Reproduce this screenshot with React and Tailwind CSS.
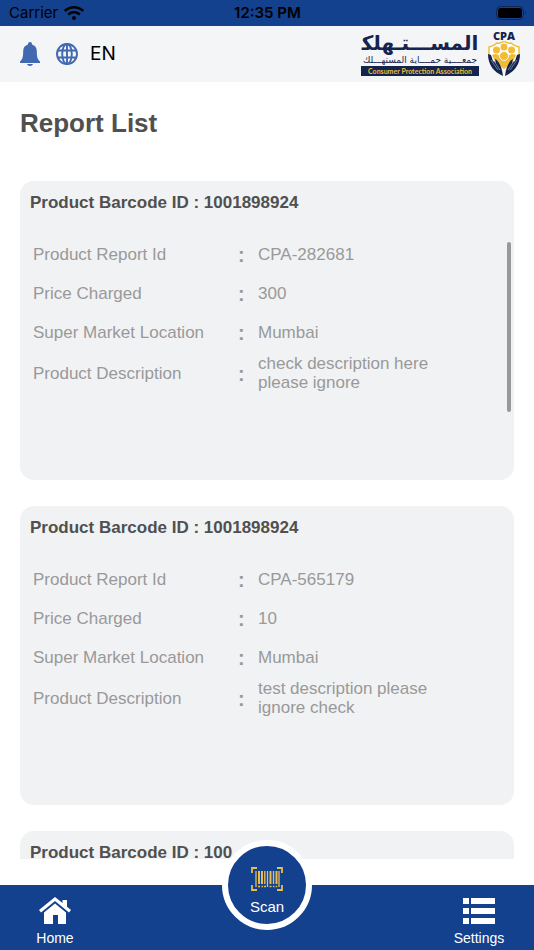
import { FaWifi } from 'react-icons/fa';

const reports = [
  { barcode: '1001898924', id: 'CPA-282681', price: '300', location: 'Mumbai', description: 'check description here please ignore', scrolling: true },
  { barcode: '1001898924', id: 'CPA-565179', price: '10', location: 'Mumbai', description: 'test description please ignore check' },
  { barcode: '100' },
];

function StatusBar() {
  return (
    <div className="h-[26px] shrink-0 bg-[#13418e] grid grid-cols-3 items-center pl-[9px] pr-2 text-black font-['Inter',sans-serif] text-[15px]">
      <div className="flex items-center gap-1.5">
        <span>Carrier</span>
        <FaWifi size={20} />
      </div>
      <span className="text-center font-semibold">12:35 PM</span>
      <svg className="justify-self-end" width="30" height="14" viewBox="0 0 30 14">
        <rect x="0.5" y="0.5" width="27" height="13" rx="4" fill="none" stroke="#0b2858" />
        <rect x="2" y="2" width="24" height="10" rx="2.5" fill="#000" />
        <path d="M29 5v4c1-.6 1-3.400 0-4z" fill="#0b2858" />
      </svg>
    </div>
  );
}

function BellIcon() {
  return (
    <svg width="20" height="24" viewBox="0 0 20 24" fill="#4069b2">
      <path d="M10 0a2 2 0 0 1 2 2v.5c3 .8 4.800 3.300 4.800 6.500 0 6 .8 8.500 3.200 10.500V21H0v-1.500C2.400 17.500 3.200 15 3.200 9c0-3.200 1.800-5.700 4.800-6.500V2a2 2 0 0 1 2-2z" />
      <path d="M7 22h6c-.4 1.300-1.500 2-3 2s-2.600-.7-3-2z" />
    </svg>
  );
}

function GlobeIcon() {
  return (
    <svg width="22" height="22" viewBox="0 0 22 22" fill="none" stroke="#4069b2" strokeWidth="1.900">
      <circle cx="11" cy="11" r="10" />
      <ellipse cx="11" cy="11" rx="4.800" ry="10" />
      <path d="M11 1v20M1.500 7.500h19M1.500 14.500h19" />
    </svg>
  );
}

function ShieldLogo() {
  return (
    <svg width="34" height="36" viewBox="0 0 34 36">
      <path d="M2 15V6Q7 5 10 2Q14 3 17 0Q20 3 24 2Q27 5 32 6V15" fill="#fff" stroke="#f2bd35" strokeWidth="1.500" />
      <circle cx="9.500" cy="9" r="3.500" fill="#f2bd35" />
      <circle cx="24.500" cy="9" r="3.500" fill="#f2bd35" />
      <circle cx="17" cy="6" r="3.500" fill="#f2bd35" />
      <path d="M5 14C8 12 12 13 13 16L17 12L21 16C22 13 26 12 29 14L25 22L17 28L9 22Z" fill="#f2bd35" />
      <circle cx="17" cy="15" r="4.500" fill="#f2bd35" stroke="#f4f5f7" />
      <path d="M1 13L4 14L6 20L9 22L8 18C11 19 15 25 16 35C7 31 1 24 1 13Z" fill="#14244f" />
      <path d="M33 13L30 14L28 20L25 22L26 18C23 19 19 25 18 35C27 31 33 24 33 13Z" fill="#14244f" />
      <path d="M4 19L11 29M7 20L13 29M30 19L23 29M27 20L21 29" stroke="#8791ab" strokeWidth="0.800" />
    </svg>
  );
}

// the trailing joiner keeps the last kaf in its open form
const brandName = 'المســـتـهلك\u200d';

function Brand() {
  return (
    <div className="flex items-center gap-2 text-[#14244f]">
      <div className="w-[118px] flex flex-col items-center whitespace-nowrap">
        <span dir="rtl" className="h-[21px] leading-[21px] text-xl font-bold font-['DejaVu_Sans',sans-serif]">{brandName}</span>
        <span dir="rtl" className="h-3 leading-3 text-[9px] font-['DejaVu_Sans',sans-serif]">جمعــــية حمــــاية المستهـــلك</span>
        <span className="w-full h-2.5 leading-[10px] text-center bg-[#14244f] text-[#f2bd35] text-[7px] font-bold font-['Lato',sans-serif]">Consumer Protection Association</span>
      </div>
      <div className="flex flex-col items-center">
        <span className="h-2.5 leading-[10px] text-[11px] font-extrabold font-['Open_Sans',sans-serif]">CPA</span>
        <ShieldLogo />
      </div>
    </div>
  );
}

function Header() {
  return (
    <header className="h-14 shrink-0 bg-[#f4f5f7] flex items-center justify-between pl-5 pr-[13px]">
      <div className="flex items-center">
        <button type="button" aria-label="Notifications">
          <BellIcon />
        </button>
        <button type="button" className="ml-4 flex items-center gap-3 text-[19px] text-black font-['Inter',sans-serif]">
          <GlobeIcon />
          EN
        </button>
      </div>
      <Brand />
    </header>
  );
}

function Row({ label, children }) {
  return (
    <div className="min-h-[39px] py-0.5 flex items-center text-[17px] leading-[19px] text-[#999999]">
      <dt className="w-[205px] shrink-0">{label}</dt>
      <span aria-hidden="true" className="w-5 shrink-0 pt-0.5 text-xl leading-[19px] font-bold">:</span>
      <dd className="w-[190px]">{children}</dd>
    </div>
  );
}

function ReportCard({ report }) {
  return (
    <article className="relative h-[299px] shrink-0 rounded-[14px] bg-[#f1f2f4] px-2.5 pt-3">
      <h2 className="text-[17px] leading-5 font-bold text-[#505050]">Product Barcode ID : {report.barcode}</h2>
      {report.id && (
        <dl className="mt-[22px] pl-[3px]">
          <Row label="Product Report Id">{report.id}</Row>
          <Row label="Price Charged">{report.price}</Row>
          <Row label="Super Market Location">{report.location}</Row>
          <Row label="Product Description">{report.description}</Row>
        </dl>
      )}
      {report.scrolling && <div className="absolute right-[3px] top-[61px] h-[170px] w-1 rounded-full bg-[#98999b]" />}
    </article>
  );
}

function ScanIcon() {
  return (
    <svg width="32" height="24" viewBox="0 0 32 24" fill="none" stroke="#e5bd52">
      <path d="M1 6V1h5M26 1h5v5M31 18v5h-5M6 23H1v-5" strokeWidth="1.800" />
      <path d="M5 4v16M16.500 4v16M28 4v16" strokeWidth="1.300" />
      <path d="M8 4v13M11 4v13M19.500 4v13M25.500 4v13" strokeWidth="2" />
      <path d="M13.800 4v13M22.500 4v13" strokeWidth="1.400" />
      <path d="M7 19.500h2M10.500 19.500h1.500M13 19.500h2M18.500 19.500h2M22 19.500h1.500M24.800 19.500h1.500" strokeWidth="1.500" />
    </svg>
  );
}

function TabBar() {
  return (
    <nav className="relative h-[65px] shrink-0 bg-[#13418e] flex items-end justify-between px-[29px] pb-1 text-white text-sm leading-4">
      <button type="button" className="w-[52px] flex flex-col items-center gap-1.5">
        <svg width="32" height="27" viewBox="0 0 32 27" fill="#fff">
          <path d="M16 0L0 13l2 2.500L16 4l14 11.500 2-2.500-4-3.300V3h-4.500v3z" />
          <path d="M5 15.500L16 6.500l11 9V27h-8v-9h-5v9H5z" />
        </svg>
        Home
      </button>
      <button type="button" className="absolute left-1/2 -top-[45px] -translate-x-1/2 size-[90px] rounded-full border-[6px] border-white bg-[#13418e] flex flex-col items-center pt-[21px] gap-2 text-[15px] leading-4">
        <ScanIcon />
        Scan
      </button>
      <button type="button" className="w-[52px] flex flex-col items-center gap-1.5">
        <svg width="32" height="26" viewBox="0 0 32 26" fill="#fff">
          <path d="M0 0h6v6H0zM8 0h24v6H8zM0 10h6v6H0zM8 10h24v6H8zM0 20h6v6H0zM8 20h24v6H8z" />
        </svg>
        Settings
      </button>
    </nav>
  );
}

export default function App() {
  return (
    <div className="h-screen flex flex-col bg-white font-['Liberation_Sans',Arial,sans-serif]">
      <StatusBar />
      <Header />
      <h1 className="px-5 pt-[25px] pb-[42px] text-[26px] leading-8 font-bold text-[#505050]">Report List</h1>
      <main className="flex-1 min-h-0 overflow-hidden mx-5 mb-[26px] flex flex-col gap-[26px]">
        {reports.map((report, i) => (
          <ReportCard key={i} report={report} />
        ))}
      </main>
      <TabBar />
    </div>
  );
}
